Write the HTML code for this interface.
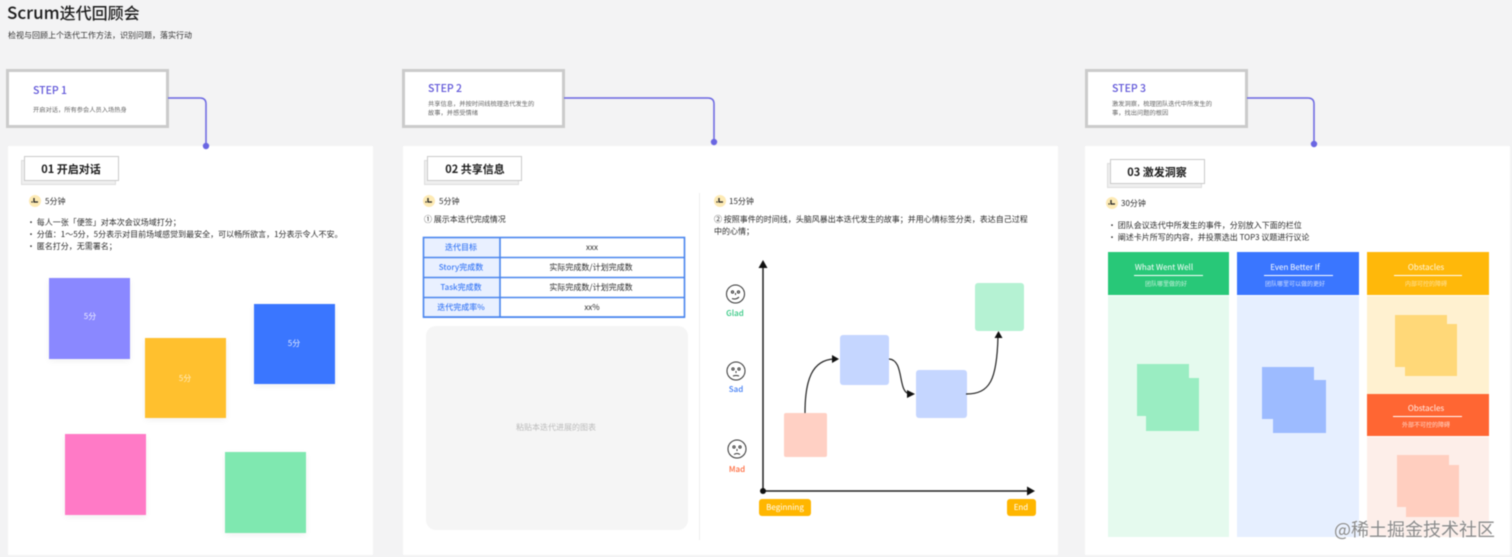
<!DOCTYPE html>
<html lang="zh"><head><meta charset="utf-8"><title>Scrum迭代回顾会</title>
<style>
html,body{margin:0;padding:0}
body{width:1512px;height:557px;background:#f3f3f4;position:relative;overflow:hidden;font-family:"Noto Sans CJK SC","Liberation Sans",sans-serif;color:#2b2b2b}
#p{position:absolute;left:0;top:0;width:1512px;height:557px;filter:blur(.4px)}
.a{position:absolute;box-sizing:border-box}
.t{position:absolute;white-space:nowrap;line-height:0;font-size:8px;margin-top:.6px}
.c{transform:translateX(-50%)}
.card{background:#fff;top:146px;height:409px}
.step{background:#fff;border:3px solid #cbcbcb;top:69px;width:163px;height:59px}
.sn{font-size:10.5px;color:#5f55d8;font-weight:500}
.ss{font-size:6.25px;color:#666}
.tb{background:#fff;border:1.2px solid #cacaca;height:25px;width:95px}
.tb2{background:#efefef;border:1px solid #ddd;height:25px;width:95px}
.tt{font-size:11px;font-weight:700;color:#1c1c1c}
.st{box-shadow:0 2px 6px rgba(0,0,0,.06)}
.wh{color:#fff}
.lb{font-weight:500}
</style></head><body><div id="p">

<div class="t" style="left:7px;top:11px;font-size:17px;font-weight:500;color:#1c1c1c">Scrum<span style="font-size:16px">迭代回顾会</span></div>
<div class="t" style="left:8px;top:35px;color:#333">检视与回顾上个迭代工作方法，识别问题，落实行动</div>

<div class="a card" style="left:8px;width:365px"></div>
<div class="a card" style="left:403px;width:655px"></div>
<div class="a card" style="left:1085px;width:425px"></div>

<div class="a step" style="left:6px"></div>
<div class="t sn" style="left:33px;top:90px">STEP 1</div>
<div class="t ss" style="left:33px;top:109px">开启对话，所有参会人员入场热身</div>
<div class="a step" style="left:402px"></div>
<div class="t sn" style="left:428px;top:88px">STEP 2</div>
<div class="t ss" style="left:428px;top:103px">共享信息，并按时间线梳理迭代发生的</div>
<div class="t ss" style="left:428px;top:112px">故事，并感受情绪</div>
<div class="a step" style="left:1085px"></div>
<div class="t sn" style="left:1112px;top:88px">STEP 3</div>
<div class="t ss" style="left:1112px;top:103px">激发洞察，梳理团队迭代中所发生的</div>
<div class="t ss" style="left:1112px;top:112px">事，找出问题的根因</div>

<svg class="a" style="left:0;top:0" width="1512" height="557" fill="none" stroke="#6a66e2" stroke-width="1.5">
<path d="M168 98H200Q206 98 206 104V146"/><circle cx="206" cy="146" r="3.2" fill="#6a66e2" stroke="none"/>
<path d="M564 98H708Q714 98 714 104V142"/><circle cx="714" cy="142" r="3.2" fill="#6a66e2" stroke="none"/>
<path d="M1247 98H1308Q1314 98 1314 104V144"/><circle cx="1314" cy="144" r="3.2" fill="#6a66e2" stroke="none"/>
</svg>

<div class="a tb2" style="left:21px;top:160px"></div><div class="a tb" style="left:24px;top:156px"></div>
<div class="t tt c" style="left:71px;top:168.500px">01 开启对话</div>
<div class="a tb2" style="left:424px;top:160px"></div><div class="a tb" style="left:427px;top:156px"></div>
<div class="t tt c" style="left:475px;top:168.500px">02 共享信息</div>
<div class="a tb2" style="left:1107px;top:163px"></div><div class="a tb" style="left:1110px;top:159px"></div>
<div class="t tt c" style="left:1157px;top:171px">03 激发洞察</div>

<svg class="a" style="left:0;top:0" width="1512" height="557">
<defs><g id="clk"><circle r="6" fill="#fdeab4"/><path d="M-1-3V1H3" fill="none" stroke="#222" stroke-width="1.3"/><circle cx="-3" cy="1" r=".7" fill="#222"/></g></defs>
<use href="#clk" x="35" y="201"/><use href="#clk" x="429" y="201"/><use href="#clk" x="720" y="201"/><use href="#clk" x="1112" y="203"/>
</svg>

<div class="t" style="left:45px;top:201px">5分钟</div>
<div class="t" style="left:27px;top:222px">· 每人一张「便签」对本次会议场域打分；</div>
<div class="t" style="left:27px;top:234px">· 分值：1～5分，5分表示对目前场域感觉到最安全，可以畅所欲言，1分表示令人不安。</div>
<div class="t" style="left:27px;top:246px">· 匿名打分，无需署名；</div>

<div class="a st" style="left:49px;top:278px;width:81px;height:81px;background:#8a88ff"></div>
<div class="t c wh" style="left:90px;top:316px;opacity:.85">5分</div>
<div class="a st" style="left:145px;top:338px;width:81px;height:80px;background:#ffc02e"></div>
<div class="t c wh" style="left:185px;top:378px;opacity:.7">5分</div>
<div class="a st" style="left:254px;top:304px;width:81px;height:80px;background:#3a76ff"></div>
<div class="t c wh" style="left:294px;top:343px;opacity:.85">5分</div>
<div class="a st" style="left:65px;top:434px;width:81px;height:81px;background:#ff7ac6"></div>
<div class="a st" style="left:225px;top:452px;width:81px;height:81px;background:#7fe8b0"></div>

<div class="t" style="left:439px;top:201px">5分钟</div>
<div class="t" style="left:424px;top:219px">① 展示本迭代完成情况</div>
<div class="a" style="left:423px;top:237px;width:262px;height:80.5px;background:#fff;border:1.6px solid #4a86ee"></div>
<div class="a" style="left:424px;top:238px;width:76px;height:79px;background:#e9f0ff"></div>
<svg class="a" style="left:0;top:0" width="1512" height="557" fill="none" stroke="#4a86ee" stroke-width="1.6"><path d="M500 237V317M423 257.500H685M423 277.500H685M423 297.500H685"/><rect x="423.500" y="237.500" width="261" height="79.500"/></svg>
<div class="t c lb" style="left:461px;top:247px;color:#3f7cf5">迭代目标</div>
<div class="t c lb" style="left:461px;top:267px;color:#3f7cf5">Story完成数</div>
<div class="t c lb" style="left:461px;top:287px;color:#3f7cf5">Task完成数</div>
<div class="t c lb" style="left:461px;top:307px;color:#3f7cf5">迭代完成率%</div>
<div class="t c" style="left:592px;top:247px">xxx</div>
<div class="t c" style="left:591px;top:267px">实际完成数/计划完成数</div>
<div class="t c" style="left:591px;top:287px">实际完成数/计划完成数</div>
<div class="t c" style="left:592px;top:307px">xx%</div>
<div class="a" style="left:426px;top:326px;width:262px;height:204px;border-radius:10px;background:#f5f5f5"></div>
<div class="t c" style="left:556px;top:427px;color:#bbb">粘贴本迭代进展的图表</div>
<div class="a" style="left:699px;top:193px;width:1px;height:347px;background:#eee"></div>

<div class="t" style="left:729px;top:201px">15分钟</div>
<div class="t" style="left:714px;top:219px">② 按照事件的时间线，头脑风暴出本迭代发生的故事；并用心情标签分类，表达自己过程</div>
<div class="t" style="left:714px;top:231px">中的心情；</div>

<div class="a" style="left:784px;top:413px;width:43px;height:44px;border-radius:2px;background:#ffd0c4"></div>
<div class="a" style="left:840px;top:335px;width:49px;height:50px;border-radius:3px;background:#c5d6ff"></div>
<div class="a" style="left:916px;top:370px;width:51px;height:48px;border-radius:3px;background:#c5d6ff"></div>
<div class="a" style="left:975px;top:283px;width:49px;height:48px;border-radius:3px;background:#b5f2d3"></div>

<svg class="a" style="left:0;top:0" width="1512" height="557" fill="none" stroke="#222" stroke-width="1.2">
<path d="M763 491V266" stroke-width="1.5"/><path d="M763 260l-4.500 8h9z" fill="#111" stroke="none"/>
<path d="M763 491H1030" stroke-width="1.5"/><path d="M1035 491l-8-4.500v9z" fill="#111" stroke="none"/>
<circle cx="763" cy="491" r="3" fill="#111" stroke="none"/>
<path d="M805 413C805 380 812 360 834 359"/><path d="M839 359l-7-4v8z" fill="#111" stroke="none"/>
<path d="M889 359C905 360 897 393 910 394"/><path d="M915 394l-8-4v8z" fill="#111" stroke="none"/>
<path d="M966 394C990 394 997 380 998 336"/><path d="M998.500 331l-4 7h8z" fill="#111" stroke="none"/>
<g stroke="#333" stroke-width="1">
<circle cx="735.500" cy="294" r="9"/><circle cx="732.500" cy="292" r="1.100"/><circle cx="738.500" cy="292" r="1.100"/><path d="M732 298.500Q736 300 739 297"/><path d="M735.500 293v2"/>
<circle cx="736" cy="371" r="9"/><circle cx="733" cy="369" r="1.100"/><circle cx="739" cy="369" r="1.100"/><path d="M733 376Q736 375 739 376"/><path d="M736 371v2"/>
<circle cx="737" cy="449" r="9"/><circle cx="734" cy="447" r="1.100"/><circle cx="740" cy="447" r="1.100"/><path d="M734 454.500Q737 452.500 740 454.500"/><path d="M737 449v2"/>
</g></svg>
<div class="t c lb" style="left:735px;top:313px;color:#30c780">Glad</div>
<div class="t c lb" style="left:736px;top:389px;color:#3f7cf5">Sad</div>
<div class="t c lb" style="left:737px;top:469px;color:#ff6a3d">Mad</div>
<div class="a" style="left:759px;top:499px;width:52px;height:17px;border-radius:3px;background:#ffb600"></div>
<div class="t c wh" style="left:785px;top:507px">Beginning</div>
<div class="a" style="left:1007px;top:499px;width:29px;height:17px;border-radius:3px;background:#ffb600"></div>
<div class="t c wh" style="left:1021px;top:507px">End</div>

<div class="t" style="left:1121px;top:203px">30分钟</div>
<div class="t" style="left:1108px;top:225px">· 团队会议迭代中所发生的事件，分别放入下面的栏位</div>
<div class="t" style="left:1108px;top:237px">· 阐述卡片所写的内容，并投票选出 TOP3 议题进行议论</div>

<div class="a" style="left:1108px;top:252px;width:121px;height:43px;background:#28c878"></div>
<div class="a" style="left:1108px;top:296px;width:121px;height:241px;background:#e5faee"></div>
<div class="a" style="left:1237px;top:252px;width:122px;height:43px;background:#3a76ff"></div>
<div class="a" style="left:1237px;top:296px;width:122px;height:241px;background:#e6efff"></div>
<div class="a" style="left:1367px;top:252px;width:122px;height:43px;background:#ffb80a"></div>
<div class="a" style="left:1367px;top:296px;width:122px;height:98px;background:#fff1d0"></div>
<div class="a" style="left:1367px;top:394px;width:122px;height:42px;background:#ff6633"></div>
<div class="a" style="left:1367px;top:437px;width:122px;height:100px;background:#fdeee9"></div>

<div class="t c wh" style="left:1164px;top:267px">What Went Well</div>
<div class="a" style="left:1134px;top:274.500px;width:69px;height:1px;background:#fff"></div>
<div class="t c wh" style="left:1166px;top:283px;font-size:6px;opacity:.75">团队哪里做的好</div>
<div class="t c wh" style="left:1295px;top:267px">Even Better If</div>
<div class="a" style="left:1264px;top:274.500px;width:69px;height:1px;background:#fff"></div>
<div class="t c wh" style="left:1295px;top:283px;font-size:6px;opacity:.75">团队哪里可以做的更好</div>
<div class="t c wh" style="left:1426px;top:267px;opacity:.9">Obstacles</div>
<div class="a" style="left:1394px;top:274.500px;width:68px;height:1px;background:#fff"></div>
<div class="t c wh" style="left:1426px;top:283px;font-size:6px;opacity:.6">内部可控的障碍</div>
<div class="t c wh" style="left:1426px;top:408.500px;opacity:.9">Obstacles</div>
<div class="a" style="left:1393px;top:416px;width:69px;height:1px;background:#fff"></div>
<div class="t c wh" style="left:1426px;top:424px;font-size:6px;opacity:.75">外部不可控的障碍</div>

<div class="a" style="left:1137px;top:364px;width:52px;height:52px;background:#9aedc2"></div>
<div class="a" style="left:1146px;top:378px;width:53px;height:53px;background:#9aedc2"></div>
<div class="a" style="left:1262px;top:367px;width:52px;height:52px;background:#9dbbff"></div>
<div class="a" style="left:1273px;top:380px;width:53px;height:53px;background:#9dbbff"></div>
<div class="a" style="left:1395px;top:315px;width:52px;height:52px;background:#ffd878"></div>
<div class="a" style="left:1405px;top:324px;width:52px;height:52px;background:#ffd878"></div>
<div class="a" style="left:1397px;top:455px;width:52px;height:52px;background:#ffcebf"></div>
<div class="a" style="left:1406px;top:465px;width:53px;height:52px;background:#ffcebf"></div>

<div class="t" style="left:1334px;top:528.500px;font-size:18px;color:#8a8a8a;text-shadow:0 0 2px #fff">@稀土掘金技术社区</div>
</div></body></html>
